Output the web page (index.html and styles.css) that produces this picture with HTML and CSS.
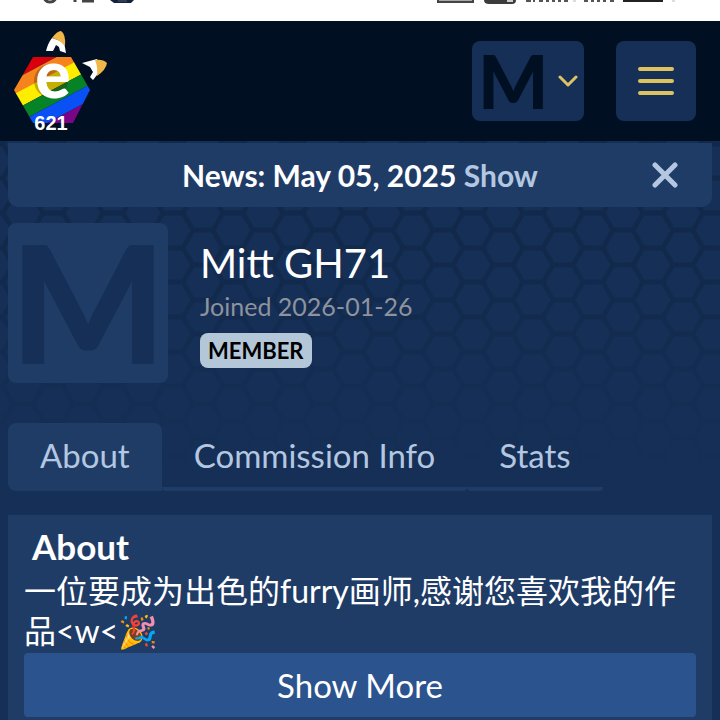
FILE: index.html
```html
<!DOCTYPE html>
<html lang="en">
<head>
<meta charset="utf-8">
<meta name="viewport" content="width=device-width, initial-scale=1">
<title>Mitt GH71</title>
<link rel="stylesheet" href="styles.css">
</head>
<body>
<svg class="honeycomb" aria-hidden="true">
  <defs>
    <pattern id="hex" width="60" height="104" patternUnits="userSpaceOnUse" patternTransform="translate(53 20)">
      <g fill="none" stroke="#11284a" stroke-width="5">
        <path d="M10-17H-10L-20 0L-10 17H10L20 0ZM-10 17L-20 35L-10 52H10L20 35L10 17M-10 52L-20 69L-10 87H10L20 69L10 52M-10 87L-20 104L-10 121H10L20 104L10 87M20 0H40M20 35H40M20 69H40M20 104H40"/>
        <path d="M50-17L40 0L50 17L40 35L50 52L40 69L50 87L40 104L50 121M50-17H70M50 17H70M50 52H70M50 87H70"/>
      </g>
    </pattern>
    <linearGradient id="fade" x1="0" y1="0" x2="0" y2="1">
      <stop offset="0" stop-color="#152f56" stop-opacity="0"/>
      <stop offset="0.4" stop-color="#152f56" stop-opacity="0.2"/>
      <stop offset="0.8" stop-color="#152f56" stop-opacity="0.8"/>
      <stop offset="1" stop-color="#152f56"/>
    </linearGradient>
  </defs>
  <rect width="100%" height="100%" fill="url(#hex)"/>
  <rect width="100%" height="100%" fill="url(#fade)"/>
</svg>
<div class="status" aria-hidden="true">
  <svg width="110" height="6" viewBox="0 0 110 6">
    <path d="M14 -2Q16 2 20 2Q24 2 26 -2M45 -3V2M52 1H64" fill="none" stroke="#444" stroke-width="3"/>
    <path d="M80 0H104L101 3H84Z" fill="#14233c"/><path d="M88 1h9" stroke="#557"/>
  </svg>
  <svg width="250" height="6" viewBox="0 0 250 6">
    <path d="M2 0V2H37V0" fill="#a5aaa2" stroke="#444" stroke-width="2"/>
    <path d="M48 0H80Q80 4 76 4H53Q48 4 48 0Z" fill="#3c3c3c"/><path d="M71 1h6" stroke="#ccc" stroke-width="2"/>
    <path d="M90 1h5M97 1h2M103 1h4M110 1h3M116 1h3M122 1h3M128 1h4M148 1h4M155 1h3M161 1h3M167 1h3M174 1h4" stroke="#555" stroke-width="2"/>
    <path d="M187 1H227" stroke="#222" stroke-width="2"/><path d="M137 1h3M236 1h3" stroke="#bbb" stroke-width="1"/>
  </svg>
</div>
<header class="topbar">
  <a class="logo" href="#" aria-label="Home">
    <svg width="100" height="112" viewBox="10 24 100 112">
      <defs>
        <clipPath id="logo-hex"><path d="M33 56H71L90 89L73 122H33L14 89Z"/></clipPath>
      </defs>
      <g clip-path="url(#logo-hex)">
        <g transform="translate(52 89) rotate(-28)">
          <path fill="#d9000d" d="M-60-60H60V-27H-60Z"/>
          <path fill="#f5841f" d="M-60-27H60V-13H-60Z"/>
          <path fill="#ffed00" d="M-60-14H60V0H-60Z"/>
          <path fill="#078327" d="M-60 0H60V13H-60Z"/>
          <path fill="#0950f5" d="M-60 13H60V27H-60Z"/>
          <path fill="#790687" d="M-60 27H60V60H-60Z"/>
        </g>
        <circle cx="51" cy="80" r="17" fill="#421d00" opacity=".3"/>
      </g>
      <path fill="#fff" d="M46 50Q48 42 52 37L64 41L66 52L60 50L59 46L56 44L53 50ZM82 62L97 58L101 69L93 79L90 76L93 71L90 66Z"/>
      <path fill="#f0b648" d="M52 37Q57 30 61 30Q66 33 65 45Q60 39 52 37ZM95 59Q103 58 107 62Q106 69 97 75Q98 66 95 59Z"/>
      <text class="logo-e" x="53" y="97" text-anchor="middle">e</text>
      <text class="logo-num" x="51" y="129" text-anchor="middle">621</text>
    </svg>
  </a>
  <nav class="actions">
    <button class="action user" type="button" aria-label="Account menu">
      <span class="initial">M</span>
      <svg width="20" height="12" viewBox="0 0 20 12"><path d="M2 2L10 10L18 2" fill="none" stroke="#dcc367" stroke-width="3" stroke-linecap="round" stroke-linejoin="round"/></svg>
    </button>
    <button class="action" type="button" aria-label="Menu">
      <svg width="36" height="28" viewBox="0 0 36 28"><path d="M2 2H34M2 14H34M2 26H34" stroke="#dcc35f" stroke-width="4" stroke-linecap="round"/></svg>
    </button>
  </nav>
</header>
<main>
  <section class="news">
    <p>News: May 05, 2025 <a href="#">Show</a></p>
    <button type="button" class="close" aria-label="Dismiss">
      <svg width="26" height="26" viewBox="0 0 26 26"><path d="M3 3L23 23M23 3L3 23" stroke="#b4c7e0" stroke-width="5" stroke-linecap="round"/></svg>
    </button>
  </section>
  <section class="profile">
    <div class="avatar">M</div>
    <div class="who">
      <h1>Mitt GH71</h1>
      <p class="joined">Joined 2026-01-26</p>
      <span class="badge">MEMBER</span>
    </div>
  </section>
  <nav class="tabs">
    <a class="active" href="#">About</a>
    <a href="#">Commission Info</a>
    <a href="#">Stats</a>
  </nav>
  <section class="panel">
    <h2>About</h2>
    <p lang="zh-CN">一位要成为出色的furry画师,感谢您喜欢我的作品&lt;w&lt;🎉</p>
    <button type="button" class="more">Show More</button>
  </section>
</main>
</body>
</html>
```

FILE: styles.css
```css
* { box-sizing: border-box; }

body {
  margin: 0;
  min-height: 100vh;
  display: flex;
  flex-direction: column;
  position: relative;
  background: #152f56;
  color: #fff;
  font-family: Lato, "Noto Sans CJK SC", sans-serif;
  font-size: 33px;
}

h1, h2, p { margin: 0; }
button { border: 0; padding: 0; font: inherit; color: inherit; cursor: pointer; }
a { color: #b4c7e0; text-decoration: none; }
svg { display: block; }

.honeycomb {
  position: absolute;
  top: 141px;
  left: 0;
  width: 100%;
  height: 350px;
  z-index: -1;
}

.status {
  height: 21px;
  background: #fff;
  display: flex;
  justify-content: space-between;
  padding: 0 34px 0 30px;
}

.topbar {
  height: 120px;
  background: #000f22;
  display: flex;
  align-items: center;
  justify-content: space-between;
  padding: 0 24px 0 10px;
}
.logo-e { font: 900 66px Lato, sans-serif; fill: #fff; }
.logo-num { font: 700 20px "Liberation Sans", sans-serif; fill: #fff; }

.actions { display: flex; gap: 32px; }
.action {
  height: 80px;
  min-width: 80px;
  border-radius: 8px;
  background: #152f56;
  display: flex;
  align-items: center;
  justify-content: center;
}
.user { width: 112px; justify-content: space-between; padding: 0 6px; }
.initial { font: 900 74px/76px Lato, sans-serif; color: #000f22; }

main {
  flex: 1;
  display: flex;
  flex-direction: column;
  padding: 2px 8px 0;
}

.news {
  height: 64px;
  display: flex;
  align-items: center;
  justify-content: center;
  position: relative;
  background: #1f3c67;
  border-radius: 0 0 10px 10px;
  font-size: 30px;
  font-weight: 700;
}
.close { position: absolute; right: 34px; background: none; }

.profile { display: flex; gap: 32px; margin-top: 16px; }
.avatar {
  width: 160px;
  height: 160px;
  border-radius: 8px;
  background: #1f3c67;
  color: #152f56;
  font: 900 164px/156px Lato, sans-serif;
  display: flex;
  justify-content: center;
}
.who { padding-top: 16px; }
h1 { font-size: 40px; font-weight: 400; line-height: 48px; }
.joined { font-size: 25px; line-height: 38px; color: #8e939d; }
.badge {
  display: inline-block;
  margin-top: 8px;
  padding: 0 8px;
  border-radius: 8px;
  background: #b4c7d9;
  color: #000;
  font-size: 22px;
  font-weight: 700;
  line-height: 35px;
  vertical-align: top;
}

.tabs { display: flex; margin-top: 40px; }
.tabs a {
  padding: 0 32px;
  line-height: 64px;
  border-bottom: 4px solid #1f3c67;
  border-radius: 8px 8px 4px 4px;
}
.tabs .active { background: #1f3c67; border-radius: 8px 8px 0 8px; }

.panel {
  flex: 1;
  margin-top: 24px;
  padding: 6px 16px 0;
  background: #1f3c67;
}
h2 { padding: 0 8px; font-size: 35px; line-height: 50px; }
.panel p { margin-bottom: 2px; font-size: 32px; line-height: 40px; }
.more {
  display: block;
  width: 100%;
  height: 64px;
  border-radius: 4px;
  background: #2b538e;
}
```
